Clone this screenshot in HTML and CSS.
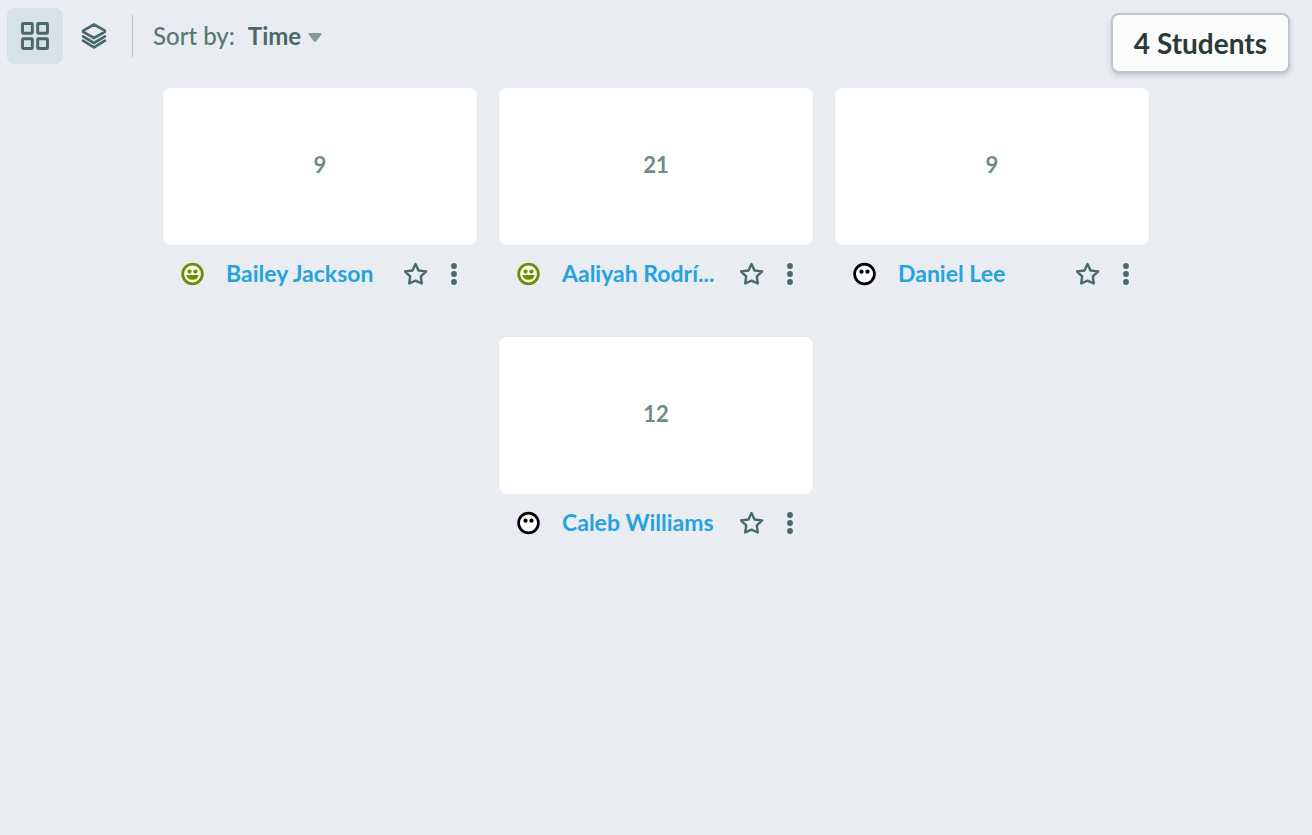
FILE: index.html
```html
<!DOCTYPE html>
<html lang="en">
<head>
    <meta charset="UTF-8">
    <title>Students</title>
    <link rel="stylesheet" href="styles.css">
</head>
<body>
    <!-- shared icons -->
    <svg class="sprite" aria-hidden="true">
        <symbol id="smile" viewBox="0 0 24 24">
            <circle cx="11.5" cy="12" r="9.8" fill="#f8faf4" stroke="currentColor" stroke-width="2.8"/>
            <circle cx="8.6" cy="9.6" r="2.1" fill="currentColor"/>
            <circle cx="14.4" cy="9.6" r="2.1" fill="currentColor"/>
            <path d="M5.5 13h12c0 3-2.6 4.800-6 4.800S5.5 16 5.5 13z" fill="currentColor"/>
        </symbol>
        <symbol id="blank" viewBox="0 0 24 24">
            <circle cx="11.5" cy="12" r="9.9" fill="#fff" stroke="currentColor" stroke-width="2.7"/>
            <circle cx="8.5" cy="9.7" r="2.1" fill="currentColor"/>
            <circle cx="14.5" cy="9.7" r="2.1" fill="currentColor"/>
        </symbol>
        <symbol id="star" viewBox="0 0 24 24">
            <path d="M11.5 2l3 6.500 7.700.9-5.400 5 1 7.100-6.300-2.800-6.300 2.800 1-7.100-5.400-5 7.700-.9z" fill="none" stroke="currentColor" stroke-width="2.4" stroke-linejoin="round"/>
        </symbol>
        <symbol id="dots" viewBox="0 0 6 24">
            <circle cx="3" cy="4" r="2.9" fill="currentColor"/>
            <circle cx="3" cy="12" r="2.9" fill="currentColor"/>
            <circle cx="3" cy="20" r="2.9" fill="currentColor"/>
        </symbol>
    </svg>

    <header class="toolbar">
        <button class="view-btn selected" type="button" aria-label="Grid">
            <svg width="30" height="30" viewBox="0 0 30 30" fill="none" stroke="currentColor" stroke-width="2.9">
                <rect x="2.5" y="2.5" width="9.8" height="9.8" rx="0.7"/>
                <rect x="17.7" y="2.5" width="9.8" height="9.8" rx="0.7"/>
                <rect x="2.5" y="17.7" width="9.8" height="9.8" rx="0.7"/>
                <rect x="17.7" y="17.7" width="9.8" height="9.8" rx="0.7"/>
            </svg>
        </button>
        <button class="view-btn" type="button" aria-label="Stack">
            <svg width="28" height="28" viewBox="0 0 28 28" fill="none" stroke="currentColor" stroke-width="2.7" stroke-linecap="round" stroke-linejoin="round">
                <path d="M14 2.500L24.800 8.700v1.200L14 16 3.200 9.900V8.700z"/>
                <path d="M3 14.300l11 6.700 11-6.700"/>
                <path d="M3 18.700l11 6.700 11-6.700"/>
            </svg>
        </button>
        <div class="sort">
            <label for="sort">Sort by:</label>
            <select id="sort">
                <option>Time</option>
            </select>
            <svg class="caret" width="14" height="9" viewBox="0 0 14 9">
                <path d="M1.500 0h11q1.500 0 .9 1.500L8.200 8.200q-1.200 1-2.400 0L.6 1.500Q0 0 1.500 0z" fill="currentColor"/>
            </svg>
        </div>
        <div class="count">4 Students</div>
    </header>

    <main class="students">
        <div class="student">
            <div class="card">9</div>
            <div class="info">
                <svg class="face happy"><use href="#smile"/></svg>
                <a class="name" href="#">Bailey Jackson</a>
                <button class="star" type="button" aria-label="Star"><svg><use href="#star"/></svg></button>
                <button class="more" type="button" aria-label="More"><svg><use href="#dots"/></svg></button>
            </div>
        </div>
        <div class="student">
            <div class="card">21</div>
            <div class="info">
                <svg class="face happy"><use href="#smile"/></svg>
                <a class="name" href="#">Aaliyah Rodrí...</a>
                <button class="star" type="button" aria-label="Star"><svg><use href="#star"/></svg></button>
                <button class="more" type="button" aria-label="More"><svg><use href="#dots"/></svg></button>
            </div>
        </div>
        <div class="student">
            <div class="card">9</div>
            <div class="info">
                <svg class="face"><use href="#blank"/></svg>
                <a class="name" href="#">Daniel Lee</a>
                <button class="star" type="button" aria-label="Star"><svg><use href="#star"/></svg></button>
                <button class="more" type="button" aria-label="More"><svg><use href="#dots"/></svg></button>
            </div>
        </div>
        <div class="student">
            <div class="card">12</div>
            <div class="info">
                <svg class="face"><use href="#blank"/></svg>
                <a class="name" href="#">Caleb Williams</a>
                <button class="star" type="button" aria-label="Star"><svg><use href="#star"/></svg></button>
                <button class="more" type="button" aria-label="More"><svg><use href="#dots"/></svg></button>
            </div>
        </div>
    </main>
</body>
</html>
```
FILE: styles.css
```css
*{
    margin:0;
    padding:0;
    box-sizing:border-box;
}
body{
    background-color:#e9edf2;
    color:#486966;
    font-family:Lato, "Noto Sans", sans-serif;
    font-size:22px;
}
button,select{
    border:0;
    background:none;
    color:inherit;
    font:inherit;
    cursor:pointer;
}
svg{
    display:block;
}
.sprite{
    position:absolute;
    width:0;
    height:0;
}
.toolbar{
    display:flex;
    align-items:flex-start;
    padding:8px 22px 0 7px;
    height:88px;
}
.view-btn{
    display:flex;
    align-items:center;
    justify-content:center;
    width:56px;
    height:56px;
    margin-right:3px;
    border-radius:8px;
}
.view-btn.selected{
    background-color:#d8e0e8;
}
.sort{
    display:flex;
    align-items:center;
    height:42px;
    margin:7px 0 0 7px;
    padding-left:20px;
    border-left:1px solid #b0c3c3;
    font-size:24px;
    line-height:32px;
}
.sort label{
    margin-right:13px;
    color:#587874;
    font-weight:500;
}
.sort select{
    appearance:none;
    font-weight:bold;
}
.caret{
    margin:2px 0 0 6px;
    color:#839c98;
    pointer-events:none;
}
.count{
    margin:5px 0 0 auto;
    padding:0 21px;
    border:2px solid #c2c4c5;
    border-radius:8px;
    background-color:#fbfdfc;
    box-shadow:0 3px 5px rgba(0,0,0,.15);
    color:#2c3b39;
    font-size:28px;
    font-weight:bold;
    line-height:56px;
}
.students{
    display:flex;
    flex-wrap:wrap;
    justify-content:center;
    gap:34px 22px;
}
.student{
    width:314px;
}
.card{
    display:flex;
    align-items:center;
    justify-content:center;
    height:157px;
    padding-bottom:4px;
    border-radius:8px;
    background-color:#fff;
    color:#6e8c88;
    font-weight:bold;
}
.info{
    display:flex;
    align-items:center;
    height:58px;
    padding:0 18px;
}
.face{
    width:24px;
    height:24px;
    color:#000;
}
.face.happy{
    color:#748b00;
}
.name{
    flex:1;
    margin-left:21px;
    padding-bottom:2px;
    overflow:hidden;
    color:#26a2df;
    font-size:23px;
    font-weight:bold;
    line-height:32px;
    text-decoration:none;
    white-space:nowrap;
}
.star svg{
    width:24px;
    height:24px;
}
.more{
    margin:0 2px 0 23px;
}
.more svg{
    width:6px;
    height:24px;
}
```
